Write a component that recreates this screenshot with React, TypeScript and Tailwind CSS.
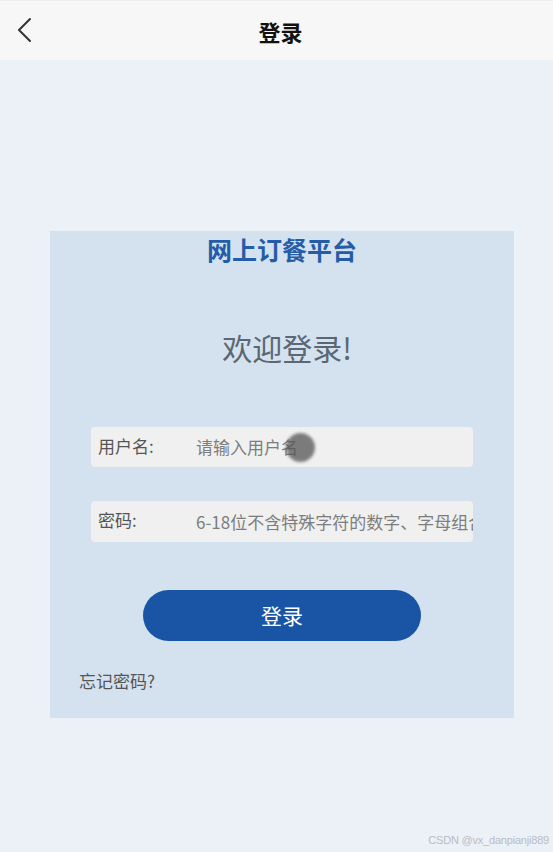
import React from "react";

export default function App() {
  const font = { fontFamily: '"Noto Sans CJK SC", "Noto Sans", sans-serif' };
  return (
    <div className="w-[553px] h-[852px] bg-[#ecf0f7] relative overflow-hidden" style={font}>
      <div className="h-[60px] bg-[#f7f7f7] border-t border-[#ececec] flex items-center relative">
        <svg className="absolute left-[16px] top-[16px]" width="18" height="26" viewBox="0 0 18 26" fill="none">
          <path d="M14 2 L3 13 L14 24" stroke="#333" strokeWidth="2" strokeLinecap="round" strokeLinejoin="round" />
        </svg>
        <div className="flex-1 text-center text-[22px] font-bold text-[#111] leading-[28px] pl-[8px]">登录</div>
      </div>
      <div className="ml-[50px] mt-[171px] w-[464px] h-[487px] bg-[#d4e2ef] flex flex-col">
        <div className="h-[36px] leading-[36px] text-center text-[25px] font-bold text-[#255ca7]">网上订餐平台</div>
        <div className="mt-[56px] h-[48px] leading-[48px] text-center text-[30px] text-[#5b6772] pl-[10px]">欢迎登录!</div>
        <div className="mt-[56px] ml-[41px] w-[382px] h-[40px] bg-[#f0f0f0] rounded-[4px] flex items-center relative">
          <span className="ml-[7px] w-[98px] text-[17px] text-[#555] -mt-[3px]">用户名:</span>
          <span className="text-[17px] text-[#7d7d7d]">请输入用户名</span>
          <div className="absolute left-[195px] top-[6px] w-[29px] h-[29px] rounded-full bg-[#555] opacity-75 blur-[1.5px]"></div>
        </div>
        <div className="mt-[34px] ml-[41px] w-[382px] h-[41px] bg-[#f0f0f0] rounded-[4px] flex items-center overflow-hidden">
          <span className="ml-[7px] w-[98px] shrink-0 text-[17px] text-[#555] -mt-[3px]">密码:</span>
          <span className="text-[17px] text-[#7d7d7d] whitespace-nowrap">6-18位不含特殊字符的数字、字母组合</span>
        </div>
        <div className="mt-[48px] ml-[93px] w-[278px] h-[51px] rounded-full bg-[#1a55a5] flex items-center justify-center text-[21px] text-white">登录</div>
        <div className="mt-[28px] ml-[29px] h-[24px] leading-[24px] text-[17px] text-[#555]">忘记密码?</div>
      </div>
      <div className="absolute right-[4px] bottom-[4px] text-[11px] text-[#b9bcc2] tracking-[-0.2px]" style={{ fontFamily: '"Liberation Sans", sans-serif' }}>CSDN @vx_danpianji889</div>
    </div>
  );
}
